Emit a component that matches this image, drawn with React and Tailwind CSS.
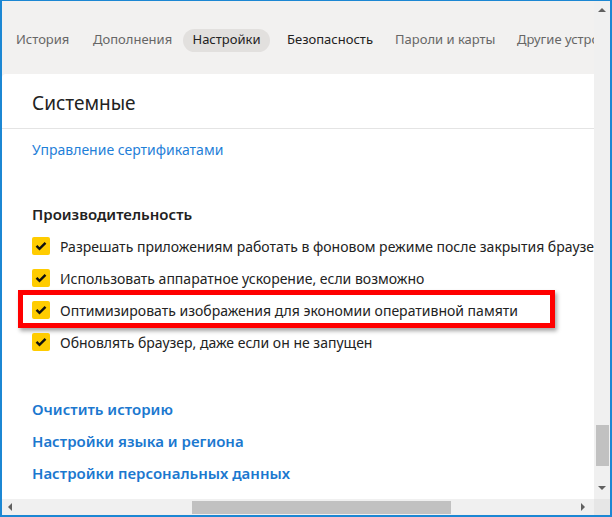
import React from 'react';

const tabs = [
  { label: 'История', w: 'w-[77px]' },
  { label: 'Дополнения', w: 'w-[103px]' },
  { label: 'Настройки', w: 'w-[91px]', active: true },
  { label: 'Безопасность', w: 'w-[108px]', hover: true },
  { label: 'Пароли и карты', w: 'w-[122px]' },
  { label: 'Другие устройства', w: 'w-[140px]' },
];

const options = [
  'Разрешать приложениям работать в фоновом режиме после закрытия браузера',
  'Использовать аппаратное ускорение, если возможно',
  'Оптимизировать изображения для экономии оперативной памяти',
  'Обновлять браузер, даже если он не запущен',
];

const links = ['Очистить историю', 'Настройки языка и региона', 'Настройки персональных данных'];

const Check = () => (
  <span className="w-[18px] h-[18px] rounded-[2px] bg-[#ffcc00] flex items-center justify-center shrink-0">
    <svg width="12" height="10" viewBox="0 0 12 10">
      <path d="M1.5 4.8 L4.5 7.8 L10.5 1.8" fill="none" stroke="#111" strokeWidth="2.4" />
    </svg>
  </span>
);

const Tabs = () => (
  <div className="h-[73px] flex items-center whitespace-nowrap text-[13px] pt-[5px]">
    {tabs.map((t) =>
      t.active ? (
        <div key={t.label} className="w-[91px] flex shrink-0">
          <span className="ml-[1px] w-[87px] h-[23px] rounded-full bg-[#e2e0de] text-[#222] flex items-center justify-center">
            {t.label}
          </span>
        </div>
      ) : (
        <span key={t.label} className={`${t.w} shrink-0 pl-[14px] ${t.hover ? 'text-[#222]' : 'text-[#666]'}`}>
          {t.label}
        </span>
      )
    )}
  </div>
);

const App = () => {
  return (
    <div
      className="w-[612px] h-[517px] border-2 border-t border-[#1c87d3] bg-[#f2f1f0] flex flex-col overflow-hidden"
      style={{ fontFamily: '"Noto Sans", "Open Sans", sans-serif' }}
    >
      <div className="flex h-[498px]">
        <div className="w-[592px] flex flex-col overflow-hidden">
          <Tabs />
          <div className="flex-1 bg-white rounded-tl-[4px] overflow-hidden whitespace-nowrap">
            <div className="h-[55px] border-b border-[#e4e4e4] pl-[30px] pt-[4px] flex items-center text-[19px] text-[#222]">
              Системные
            </div>
            <div className="pl-[30px]">
              <div className="mt-[11px] h-[20px] leading-[20px] text-[14px] text-[#1f80d8]">Управление сертификатами</div>
              <div className="mt-[44px] h-[20px] leading-[20px] text-[15px] font-semibold text-[#222]">Производительность</div>
              <div className="mt-[6px]">
                {options.map((o, i) => (
                  <div key={o} className="relative h-[32px] flex items-center gap-[10px] text-[14px] text-[#222]">
                    <Check />
                    <span>{o}</span>
                    {i === 2 && (
                      <div className="absolute left-[-14px] top-[-4px] w-[537px] h-[38px] border-[5px] border-[#ff0000] shadow-[2px_3px_4px_rgba(0,0,0,0.35)]" />
                    )}
                  </div>
                ))}
              </div>
              <div className="mt-[35px]">
                {links.map((l) => (
                  <div key={l} className="h-[32px] flex items-center text-[15px] font-semibold text-[#1b78cf]">
                    {l}
                  </div>
                ))}
              </div>
            </div>
          </div>
        </div>
        <div className="w-[16px] flex flex-col items-center bg-[#f0f0f0]">
          <div className="h-[11px] flex items-end">
            <span className="w-0 h-0 border-l-[4px] border-r-[4px] border-b-[4px] border-l-transparent border-r-transparent border-b-[#606060]" />
          </div>
          <div className="flex-1 w-full flex flex-col justify-end items-center">
            <div className="w-[13px] h-[41px] bg-[#c1c1c1] mb-[20px]" />
          </div>
          <div className="h-[13px] flex items-start">
            <span className="w-0 h-0 border-l-[4px] border-r-[4px] border-t-[4px] border-l-transparent border-r-transparent border-t-[#606060]" />
          </div>
        </div>
      </div>
      <div className="flex flex-1">
        <div className="w-[592px] flex items-center bg-[#f0f0f0] relative">
          <span className="ml-[6px] w-0 h-0 border-t-[4px] border-b-[4px] border-r-[4px] border-t-transparent border-b-transparent border-r-[#606060]" />
          <div className="ml-[180px] w-[259px] h-[13px] bg-[#c1c1c1]" />
          <span className="ml-[130px] w-0 h-0 border-t-[4px] border-b-[4px] border-l-[4px] border-t-transparent border-b-transparent border-l-[#606060]" />
        </div>
        <div className="flex-1 bg-[#e6e6e6]" />
      </div>
    </div>
  );
};

export default App;
